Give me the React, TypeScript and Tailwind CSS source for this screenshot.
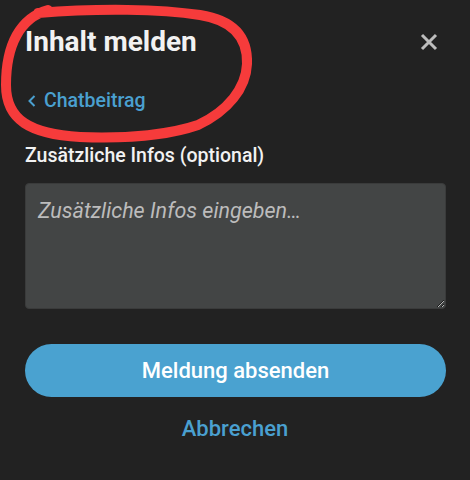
import React from "react";

/**
 * Report content sheet ("Inhalt melden") on a dark surface,
 * with a hand-drawn red marker ring around the header.
 */

function CloseIcon() {
  return (
    <svg width="18" height="18" viewBox="0 0 18 18" fill="none">
      <path d="M2 2L16 16M16 2L2 16" stroke="#bdbdbd" strokeWidth="3" strokeLinecap="butt" />
    </svg>
  );
}

function ChevronLeft() {
  return (
    <svg width="10" height="14" viewBox="0 0 10 14" fill="none">
      <path d="M7.5 2L2.5 7L7.5 12" stroke="#4aa0d0" strokeWidth="2" />
    </svg>
  );
}

function MarkerRing() {
  return (
    <svg
      className="pointer-events-none absolute left-0 top-0"
      width="260"
      height="150"
      viewBox="0 0 260 150"
      fill="none"
    >
      <path
        d="M48 10 C 20 18, 6 45, 6 85 C 6 120, 30 134, 80 137 C 130 139, 172 134, 198 125 C 228 111, 246 88, 247 64 C 248 36, 232 20, 200 15 C 160 9, 100 8, 38 13"
        stroke="#f63b3b"
        strokeWidth="10"
        strokeLinecap="round"
        strokeLinejoin="round"
      />
    </svg>
  );
}

export default function App() {
  return (
    <div className="relative h-[480px] w-[470px] overflow-hidden bg-[#222222] px-[25px] font-['Roboto',sans-serif]">
      <div className="flex items-center justify-between pt-[24px]">
        <h1 className="text-[28px] font-bold leading-[36px] text-[#f2f2f2]">Inhalt melden</h1>
        <button className="mr-[4px] flex h-[24px] w-[24px] items-center justify-center">
          <CloseIcon />
        </button>
      </div>

      <button className="mt-[29px] flex items-center gap-[7px] pl-[2px] text-[19.5px] font-medium leading-[24px] text-[#4aa0d0]">
        <ChevronLeft />
        <span>Chatbeitrag</span>
      </button>

      <label className="mt-[31px] block text-[19.5px] font-medium leading-[24px] text-[#f2f2f2]">
        Zusätzliche Infos (optional)
      </label>

      <textarea
        className="mt-[15px] block h-[126px] w-[421px] rounded-[4px] border border-[#3a3b3b] bg-[#434545] px-[12px] pt-[13px] text-[21.5px] leading-[28px] text-white outline-none placeholder:italic placeholder:text-[#bcbcbc]"
        placeholder="Zusätzliche Infos eingeben…"
      />

      <button className="mt-[35px] flex h-[53px] w-[421px] items-center justify-center rounded-full bg-[#4aa2d0] text-[22px] font-medium text-white">
        Meldung absenden
      </button>

      <div className="mt-[18px] text-center text-[22px] font-medium leading-[28px] text-[#4aa0d0]">
        Abbrechen
      </div>

      <MarkerRing />
    </div>
  );
}
